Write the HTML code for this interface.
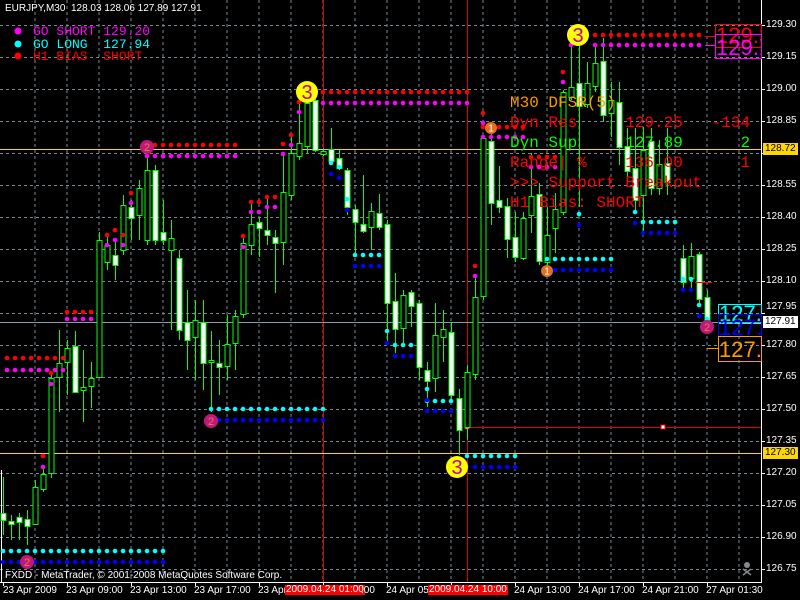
<!DOCTYPE html>
<html><head><meta charset="utf-8">
<style>
html,body{margin:0;padding:0;background:#000;}
#c{position:relative;width:800px;height:600px;overflow:hidden;background:#000;}
svg{position:absolute;left:0;top:0;}
.t{position:absolute;white-space:pre;line-height:1;}
.ax{font-family:"Liberation Sans",sans-serif;font-size:10px;color:#fff;}
.mono{font-family:"Liberation Mono",monospace;}
</style></head><body>
<div id="c">
<svg id="s" width="800" height="600" xmlns="http://www.w3.org/2000/svg"></svg>

<div class="t ax" style="left:5px;top:4px;font-size:10px;">EURJPY,M30  128.03 128.06 127.89 127.91</div>
<div class="t mono" style="left:33px;top:25px;font-size:13px;color:#ff00ff;">GO SHORT 129.20</div>
<div class="t mono" style="left:33px;top:38px;font-size:13px;color:#00ffff;">GO LONG  127.94</div>
<div class="t mono" style="left:33px;top:50px;font-size:13px;color:#ff0000;">H1 BIAS  SHORT</div>

<div class="t mono" style="left:510px;top:95px;font-size:16px;color:#ff9900;">M30 DFSR(5)</div>
<div class="t mono" style="left:510px;top:115px;font-size:16px;color:#ff0000;">Dyn Res     129.25   -134</div>
<div class="t mono" style="left:510px;top:135px;font-size:16px;color:#00ff00;">Dyn Sup     127.89      2</div>
<div class="t mono" style="left:510px;top:155px;font-size:16px;color:#ff0000;">Range| %    136.00      1</div>
<div class="t mono" style="left:510px;top:175px;font-size:16px;color:#ff0000;">&gt;&gt;&gt; Support Breakout</div>
<div class="t mono" style="left:510px;top:195px;font-size:16px;color:#ff0000;">H1 Bias: SHORT</div>

<div class="t ax" style="left:5px;top:571px;">FXDD - MetaTrader, © 2001-2008 MetaQuotes Software Corp.</div>

<div class="t ax" style="left:766px;top:20px;">129.30</div>
<div class="t ax" style="left:766px;top:52px;">129.15</div>
<div class="t ax" style="left:766px;top:84px;">129.00</div>
<div class="t ax" style="left:766px;top:116px;">128.85</div>
<div class="t ax" style="left:763px;top:143px;background:#ffd700;color:#000;padding:1px 2px;">128.72</div>
<div class="t ax" style="left:766px;top:180px;">128.55</div>
<div class="t ax" style="left:766px;top:212px;">128.40</div>
<div class="t ax" style="left:766px;top:244px;">128.25</div>
<div class="t ax" style="left:766px;top:276px;">128.10</div>
<div class="t ax" style="left:766px;top:302px;">127.95</div>
<div class="t ax" style="left:763px;top:316px;background:#fff;color:#000;padding:1px 2px;">127.91</div>
<div class="t ax" style="left:766px;top:340px;">127.80</div>
<div class="t ax" style="left:766px;top:372px;">127.65</div>
<div class="t ax" style="left:766px;top:404px;">127.50</div>
<div class="t ax" style="left:766px;top:436px;">127.35</div>
<div class="t ax" style="left:763px;top:447px;background:#ffd700;color:#000;padding:1px 2px;">127.30</div>
<div class="t ax" style="left:766px;top:468px;">127.20</div>
<div class="t ax" style="left:766px;top:500px;">127.05</div>
<div class="t ax" style="left:766px;top:532px;">126.90</div>
<div class="t ax" style="left:766px;top:564px;">126.75</div>

<div class="t ax" style="left:3px;top:586px;">23 Apr 2009</div>
<div class="t ax" style="left:66px;top:586px;">23 Apr 09:00</div>
<div class="t ax" style="left:130px;top:586px;">23 Apr 13:00</div>
<div class="t ax" style="left:194px;top:586px;">23 Apr 17:00</div>
<div class="t ax" style="left:258px;top:586px;">23 Apr</div>
<div class="t ax" style="left:285px;top:585px;background:#ff0000;padding:0 1px;">2009.04.24 01:00</div>
<div class="t ax" style="left:361px;top:586px;">:00</div>
<div class="t ax" style="left:386px;top:586px;">24 Apr 05</div>
<div class="t ax" style="left:428px;top:585px;background:#ff0000;padding:0 1px;">2009.04.24 10:00</div>
<div class="t ax" style="left:514px;top:586px;">24 Apr 13:00</div>
<div class="t ax" style="left:578px;top:586px;">24 Apr 17:00</div>
<div class="t ax" style="left:642px;top:586px;">24 Apr 21:00</div>
<div class="t ax" style="left:706px;top:586px;">27 Apr 01:30</div>

<div class="t" style="left:715px;top:24px;width:45px;height:22px;border:1px solid #f00;overflow:hidden;font-family:'Liberation Sans',sans-serif;font-size:22px;color:#f00;line-height:22px;">129.3</div>
<div class="t" style="left:715px;top:34px;width:45px;height:23px;border:1px solid #f0f;overflow:hidden;font-family:'Liberation Sans',sans-serif;font-size:22px;color:#f0f;line-height:26px;">129.1</div>
<div class="t" style="left:718px;top:304px;width:42px;height:18px;border:1px solid #0ff;overflow:hidden;font-family:'Liberation Sans',sans-serif;font-size:22px;color:#0ff;line-height:18px;">127.9</div>
<div class="t" style="left:718px;top:314px;width:42px;height:21px;border:1px solid #00f;overflow:hidden;font-family:'Liberation Sans',sans-serif;font-size:22px;color:#00f;line-height:26px;">127.9</div>
<div class="t" style="left:718px;top:336px;width:42px;height:24px;border:1px solid #ff9900;overflow:hidden;font-family:'Liberation Sans',sans-serif;font-size:22px;color:#ff9900;line-height:26px;">127.7</div>
</div>

<script>
var s=document.getElementById('s');var NS='http://www.w3.org/2000/svg';
function el(t,a){var e=document.createElementNS(NS,t);for(var k in a)e.setAttribute(k,a[k]);s.appendChild(e);return e;}
for(var x=35;x<761;x+=32)el('line',{x1:x,y1:0,x2:x,y2:582,stroke:'#778899','stroke-dasharray':'3,3','stroke-width':1});
for(var y=25;y<582;y+=32)el('line',{x1:0,y1:y+.5,x2:761,y2:y+.5,stroke:'#778899','stroke-dasharray':'3,3','stroke-width':1});
el('line',{x1:323.5,y1:0,x2:323.5,y2:582,stroke:'#e00000'});
el('line',{x1:467.5,y1:0,x2:467.5,y2:582,stroke:'#e00000'});
el('line',{x1:0,y1:149.5,x2:761,y2:149.5,stroke:'#ffd700'});
el('line',{x1:0,y1:453.5,x2:761,y2:453.5,stroke:'#ffd700'});
el('line',{x1:0,y1:322.5,x2:761,y2:322.5,stroke:'#8899aa'});
el('line',{x1:467,y1:427.5,x2:761,y2:427.5,stroke:'#e00000'});
el('rect',{x:465,y:425,width:4,height:4,fill:'#fff',stroke:'#f00'});
el('rect',{x:661,y:425,width:4,height:4,fill:'#fff',stroke:'#f00'});
el('line',{x1:761.5,y1:0,x2:761.5,y2:583,stroke:'#fff'});
el('line',{x1:0,y1:582.5,x2:762,y2:582.5,stroke:'#fff'});
el('line',{x1:1.5,y1:470,x2:1.5,y2:582,stroke:'#fff'});
for(var y=25;y<582;y+=32)el('line',{x1:761,y1:y+.5,x2:765,y2:y+.5,stroke:'#fff'});
for(var x=3;x<761;x+=64)el('line',{x1:x+.5,y1:582,x2:x+.5,y2:586,stroke:'#fff'});
// legend dots
el('circle',{cx:18,cy:31,r:3.5,fill:'#f0f'});
el('circle',{cx:18,cy:44,r:3.5,fill:'#0ff'});
el('circle',{cx:18,cy:56,r:3.5,fill:'#f00'});
var C=[[3,513,520,477,535,1],[11,521,524,515,540,1],[19,517,522,513,540,1],[27,519,526,510,545,1],[35,487,524,480,525,0],[43,474,489,466,492,0],[51,378,473,375,478,0],[59,363,377,330,412,0],[67,348,362,340,395,0],[75,346,392,331,392,1],[83,387,390,350,422,0],[91,378,386,362,408,0],[99,240,377,232,378,0],[107,245,262,235,270,0],[115,255,265,240,280,1],[123,205,250,195,255,0],[131,207,218,200,240,1],[139,188,215,180,240,0],[147,170,240,155,245,0],[155,170,240,165,245,1],[163,232,240,200,245,1],[171,238,250,220,330,0],[179,258,330,250,340,1],[187,322,340,290,370,1],[195,320,337,300,380,0],[203,322,363,300,390,1],[211,360,362,331,412,0],[219,363,367,340,395,1],[227,344,366,315,380,0],[235,316,343,310,370,0],
[243,243,314,237,318,0],[251,224,245,203,255,0],[259,222,228,217,257,1],[267,230,235,197,245,1],[275,237,243,230,293,1],[283,192,242,153,265,0],[291,153,195,135,200,0],[299,143,156,103,160,0],[307,103,146,100,153,0],[315,100,150,95,152,1],[323,151,154,148,156,0],[331,149,161,128,165,1],[339,158,168,150,170,1],[347,170,207,168,215,1],[355,209,222,205,253,1],[363,224,231,175,233,1],[371,211,227,203,250,0],[379,213,227,194,230,1],[387,224,303,220,343,1],[395,301,329,273,353,1],[403,295,328,290,347,0],[411,292,306,290,327,1],[419,303,367,300,380,1],[427,370,381,362,407,1],[435,335,378,303,392,0],[443,329,337,310,362,0],[451,332,395,322,400,1],[459,398,430,389,455,1],[467,372,427,365,440,0],[475,297,374,277,380,0],[483,138,296,135,300,0],[491,141,203,125,225,1],[499,200,207,166,213,1],[507,206,239,198,258,1],[515,237,257,212,262,1],[523,218,258,212,260,0],[531,196,215,153,233,0],[539,194,261,183,265,1],[547,235,262,207,273,0],[555,209,228,193,253,0],[563,92,212,90,215,0],[571,87,97,47,100,0],[579,83,106,43,207,1],[587,83,104,62,108,0],[595,63,86,45,92,0],[603,61,115,38,122,1],[611,100,113,82,137,0],[619,102,147,82,165,1],[627,146,171,128,177,1],[635,168,200,128,210,1],[643,150,195,127,233,0],[651,141,188,128,195,1],[659,164,188,140,195,0],[667,163,182,128,195,1],[683,258,282,245,290,1],[691,256,278,243,290,0],[699,254,299,252,303,1],[707,297,320,290,323,1]];
C.forEach(function(c){var x=c[0]+.5;
el('line',{x1:x,y1:c[3],x2:x,y2:c[4],stroke:'#00ff00'});
el('rect',{x:c[0]-2,y:c[1]+.5,width:5,height:Math.max(1,c[2]-c[1]),fill:c[5]?'#fff':'#000',stroke:'#00ff00'});});
function row(x0,x1,y,col){for(var x=x0;x<=x1;x+=8)el('circle',{cx:x,cy:y,r:2.3,fill:col});}
row(7,63,358,'#f00');row(7,63,370,'#f0f');
row(67,95,312,'#f00');row(67,95,319,'#f0f');
row(147,235,145,'#f00');row(147,235,156,'#f0f');
row(323,467,92,'#f00');row(323,467,103,'#f0f');
row(595,705,35,'#f00');row(595,705,45,'#f0f');
row(483,523,127,'#f00');row(483,523,137,'#f0f');
row(531,555,157,'#f00');row(531,555,167,'#f0f');
row(211,323,409,'#0ff');row(211,323,420,'#00f');
row(3,163,551,'#0ff');row(3,163,562,'#00f');
row(355,379,255,'#0ff');row(355,379,266,'#00f');
row(395,411,345,'#0ff');row(395,411,356,'#00f');
row(427,451,401,'#0ff');row(427,451,411,'#00f');
row(467,515,456,'#0ff');row(467,515,467,'#00f');
row(547,611,259,'#0ff');row(547,611,270,'#00f');
row(643,675,222,'#0ff');row(643,675,233,'#00f');
row(683,691,279,'#0ff');row(683,691,290,'#00f');
var sd=[[43,456,467],[51,373,384],[243,236,247],[251,202,212],[259,202,212],[267,197,207],[275,197,207],[283,144,154],[291,135,145],[299,102,112],[123,235,245],[131,193,203],[107,235,245],[115,230,240],[475,266,276],[483,113,123],[563,72,82],[571,35,45]];
sd.forEach(function(d){el('circle',{cx:d[0],cy:d[1],r:2.3,fill:'#f00'});el('circle',{cx:d[0],cy:d[2],r:2.3,fill:'#f0f'});});
var su=[[331,163,174],[339,167,178],[347,199,210],[387,331,343],[427,389,400],[699,305,316],[707,319,326],[579,214,225],[635,212,223]];
su.forEach(function(d){el('circle',{cx:d[0],cy:d[1],r:2.3,fill:'#0ff'});el('circle',{cx:d[0],cy:d[2],r:2.3,fill:'#00f'});});
el('line',{x1:705,y1:36.5,x2:715,y2:36.5,stroke:'#f00'});
el('line',{x1:705,y1:45.5,x2:715,y2:45.5,stroke:'#f0f'});
el('line',{x1:707,y1:348.5,x2:718,y2:348.5,stroke:'#ff9900'});
el('line',{x1:695,y1:282.5,x2:712,y2:282.5,stroke:'#f00'});
function circ(x,y,r,f,t,tc,fs){el('circle',{cx:x,cy:y,r:r,fill:f});var e=el('text',{x:x,y:y+fs*0.36,'text-anchor':'middle','font-family':'Liberation Sans,sans-serif','font-size':fs,fill:tc});e.textContent=t;}
circ(307,92,11,'#ffff00','3','#c000a0',20);
circ(578,35,11,'#ffff00','3','#c000a0',20);
circ(457,467,11,'#ffff00','3','#c000a0',20);
circ(147,147,7,'#c0187a','2','#e08040',11);
circ(211,421,7,'#c0187a','2','#e08040',11);
circ(27,562,7,'#c0187a','2','#e08040',11);
circ(707,327,7,'#c0187a','2','#e08040',11);
circ(491,128,6,'#e07020','1','#ffffff',10);
circ(547,271,6,'#e07020','1','#ffffff',10);
el('circle',{cx:747,cy:565,r:3,fill:'#888'});
el('line',{x1:743,y1:569,x2:751,y2:575,stroke:'#888','stroke-width':1.5});
el('line',{x1:751,y1:569,x2:743,y2:575,stroke:'#888','stroke-width':1.5});
</script>
</body></html>
